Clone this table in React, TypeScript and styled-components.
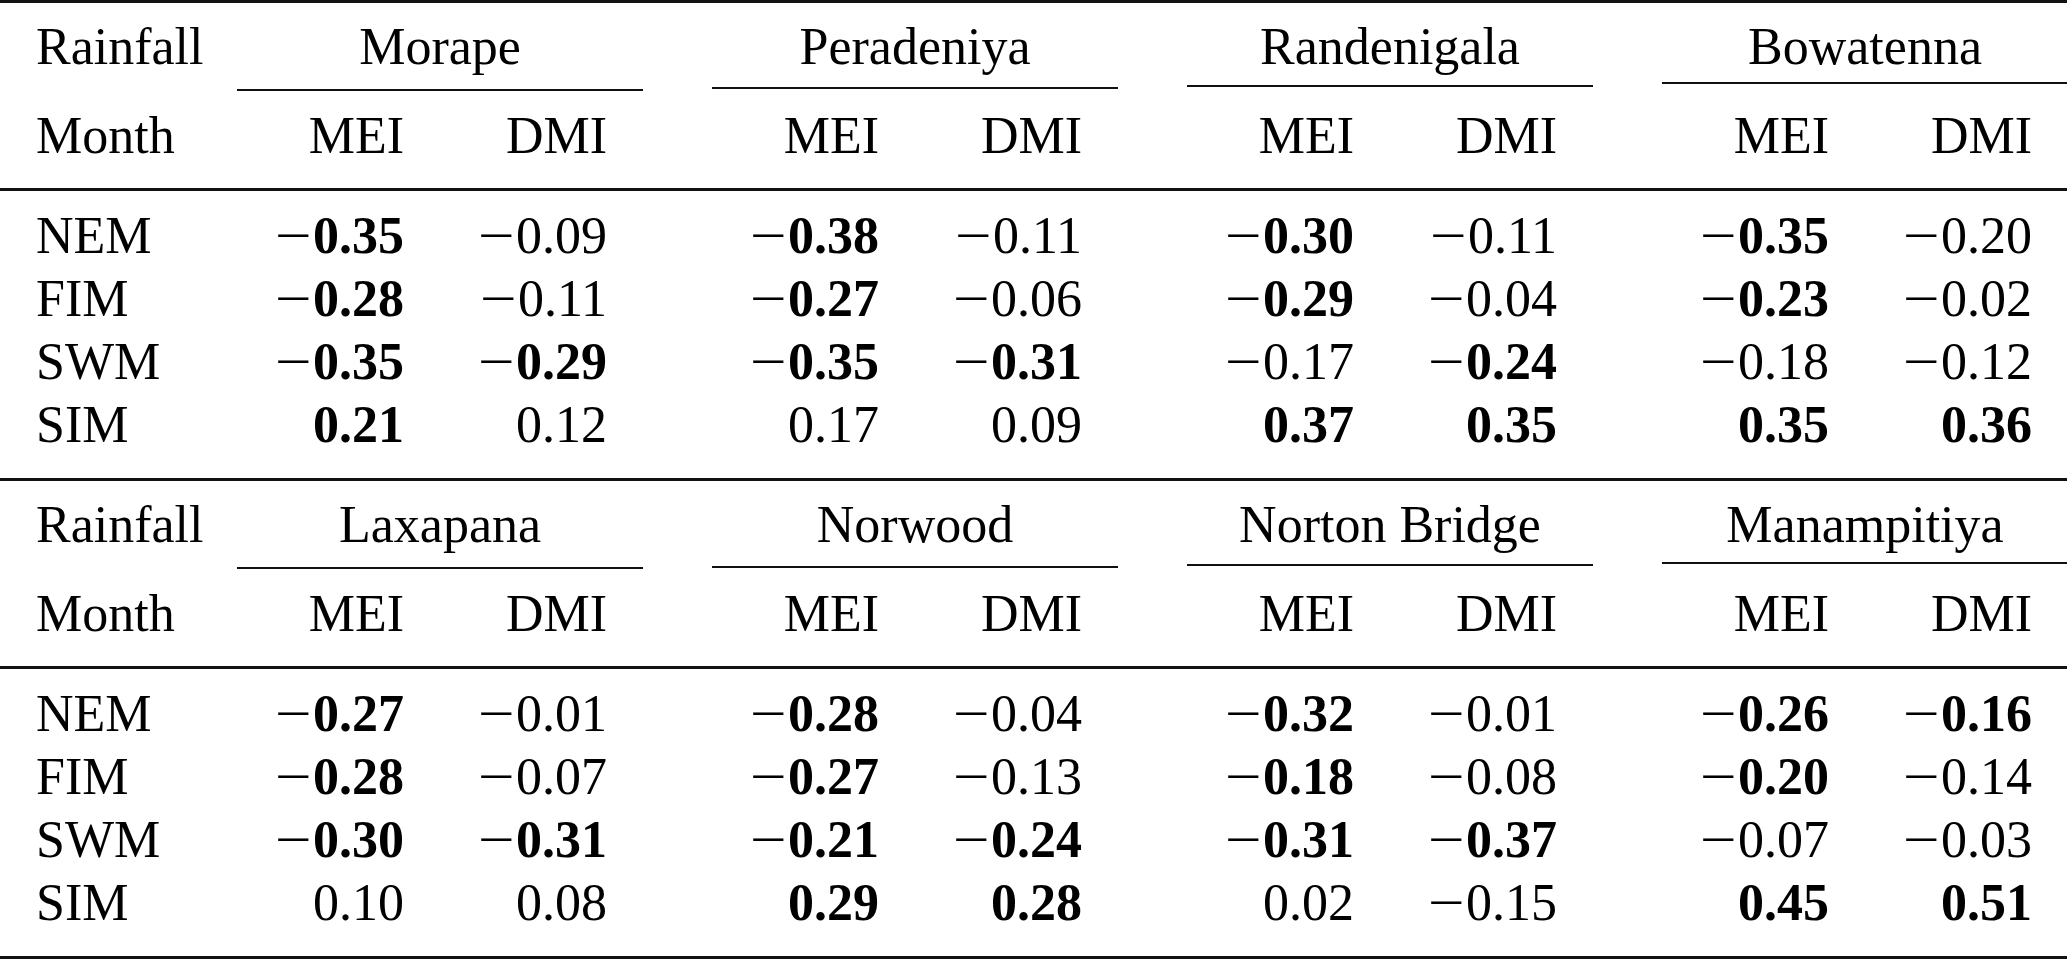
import styled, { createGlobalStyle } from 'styled-components'

const GlobalStyle = createGlobalStyle`
  html, body {
    margin: 0;
    padding: 0;
    background: #ffffff;
    overflow: hidden;
  }
  body {
    font-family: "Liberation Serif", "Times New Roman", serif;
    color: #000000;
  }
`

// '*' marks a bold (significant) value
const blocks = [
  {
    groups: ['Morape', 'Peradeniya', 'Randenigala', 'Bowatenna'],
    lifts: [0, 2, 4, 7],
    rows: [
      ['NEM', '*-0.35', '-0.09', '*-0.38', '-0.11', '*-0.30', '-0.11', '*-0.35', '-0.20'],
      ['FIM', '*-0.28', '-0.11', '*-0.27', '-0.06', '*-0.29', '-0.04', '*-0.23', '-0.02'],
      ['SWM', '*-0.35', '*-0.29', '*-0.35', '*-0.31', '-0.17', '*-0.24', '-0.18', '-0.12'],
      ['SIM', '*0.21', '0.12', '0.17', '0.09', '*0.37', '*0.35', '*0.35', '*0.36'],
    ],
  },
  {
    groups: ['Laxapana', 'Norwood', 'Norton Bridge', 'Manampitiya'],
    lifts: [0, 1, 3, 5],
    rows: [
      ['NEM', '*-0.27', '-0.01', '*-0.28', '-0.04', '*-0.32', '-0.01', '*-0.26', '*-0.16'],
      ['FIM', '*-0.28', '-0.07', '*-0.27', '-0.13', '*-0.18', '-0.08', '*-0.20', '-0.14'],
      ['SWM', '*-0.30', '*-0.31', '*-0.21', '*-0.24', '*-0.31', '*-0.37', '-0.07', '-0.03'],
      ['SIM', '0.10', '0.08', '*0.29', '*0.28', '0.02', '-0.15', '*0.45', '*0.51'],
    ],
  },
]

const Table = styled.div`
  width: 2067px;
  border-top: 3px solid #111111;
  font-size: 52px;
  line-height: 63px;
`

const Block = styled.section`
  padding: 12px 0 22px;
  border-bottom: 3px solid #111111;
`

const Head = styled.div`
  padding-bottom: 21px;
  border-bottom: 3px solid #111111;
`

const Body = styled.div`
  padding-top: 13px;
`

const Row = styled.div`
  display: grid;
  grid-template-columns: 168px repeat(4, 406px);
  column-gap: 69px;
  white-space: nowrap;
`

const Label = styled.div`
  padding-left: 36px;
`

const GroupHead = styled.div`
  display: flex;
  flex-direction: column;
  align-items: stretch;
`

const GroupTitle = styled.div`
  text-align: center;
`

const Underline = styled.div<{ $lift: number }>`
  height: 2px;
  background: #111111;
  margin-top: ${({ $lift }) => 11 - $lift}px;
  margin-bottom: ${({ $lift }) => 13 + $lift}px;
`

const Pair = styled.div`
  display: grid;
  grid-template-columns: 203px 203px;
`

const Cell = styled.div`
  text-align: right;
  padding-right: 36px;
`

// the math minus of the source is wider than the text one
const Minus = styled.span`
  display: inline-block;
  font-weight: 400;
  margin-right: 2px;
  transform: scaleX(1.25);
  transform-origin: right center;
`

const Bold = styled.span`
  font-weight: 700;
`

const Value = ({ raw }: { raw: string }) => {
  const bold = raw.startsWith('*')
  const num = bold ? raw.slice(1) : raw
  const neg = num.startsWith('-')
  const abs = neg ? num.slice(1) : num
  return (
    <Cell>
      {neg && <Minus>{'\u2212'}</Minus>}
      {bold ? <Bold>{abs}</Bold> : abs}
    </Cell>
  )
}

const App = () => {
  return (
    <>
      <GlobalStyle />
      <Table>
        {blocks.map((block, b) => (
          <Block key={b}>
            <Head>
              <Row>
                <Label>Rainfall</Label>
                {block.groups.map((g, i) => (
                  <GroupHead key={g}>
                    <GroupTitle>{g}</GroupTitle>
                    <Underline $lift={block.lifts[i]} />
                  </GroupHead>
                ))}
              </Row>
              <Row>
                <Label>Month</Label>
                {block.groups.map((g) => (
                  <Pair key={g}>
                    <Cell>MEI</Cell>
                    <Cell>DMI</Cell>
                  </Pair>
                ))}
              </Row>
            </Head>
            <Body>
              {block.rows.map(([month, ...vals]) => (
                <Row key={month}>
                  <Label>{month}</Label>
                  {[0, 1, 2, 3].map((i) => (
                    <Pair key={i}>
                      <Value raw={vals[i * 2]} />
                      <Value raw={vals[i * 2 + 1]} />
                    </Pair>
                  ))}
                </Row>
              ))}
            </Body>
          </Block>
        ))}
      </Table>
    </>
  )
}

export default App
